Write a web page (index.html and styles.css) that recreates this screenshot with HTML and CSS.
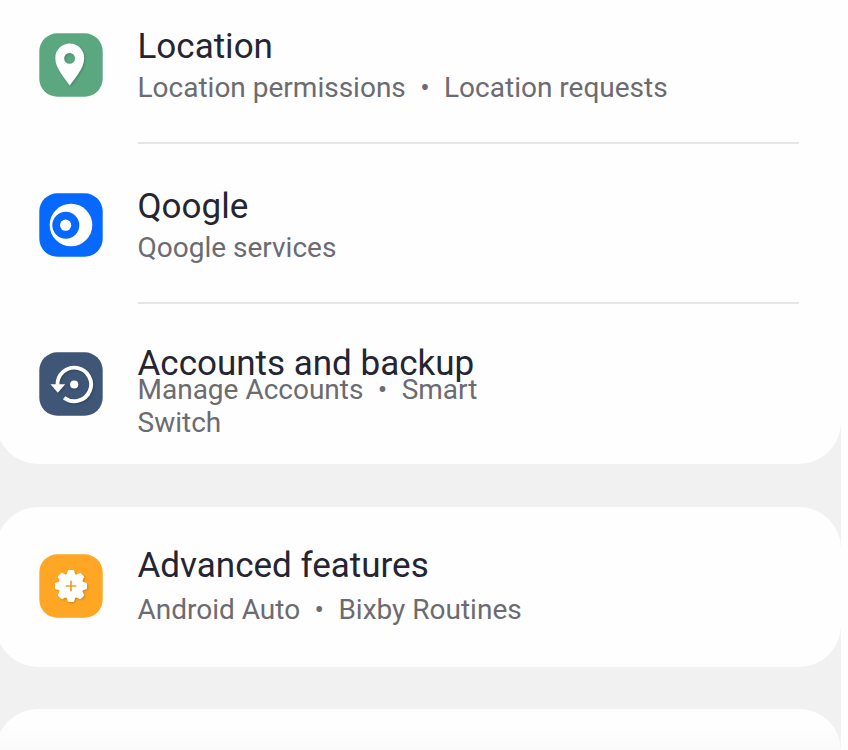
FILE: index.html
```html
<!DOCTYPE html>
<html lang="en">
<head>
<meta charset="utf-8">
<title>Settings</title>
<link rel="stylesheet" href="styles.css">
</head>
<body>
<main class="screen">
  <section class="card card-first">
    <div class="row row-location">
      <svg class="icon" viewBox="0 0 64 64">
        <rect class="tile green" x=".3" y=".3" width="63.4" height="63.4" rx="18"/>
        <path class="white shadow" fill-rule="evenodd" d="M30.8 10.6C22.5 10.6 16.3 17 16.3 25.2C16.3 35.6 26.5 46 30.8 52.6C35.1 46 45.2 35.6 45.2 25.2C45.2 17 39 10.6 30.8 10.6ZM30.6 20A5.4 5.4 0 1 1 30.6 30.8A5.4 5.4 0 1 1 30.6 20Z"/>
      </svg>
      <div class="text">
        <h2>Location</h2>
        <p>Location permissions<span class="dot">•</span>Location requests</p>
      </div>
    </div>
    <div class="row row-qoogle">
      <svg class="icon" viewBox="0 0 64 64">
        <rect class="tile blue" x=".3" y=".3" width="63.4" height="63.4" rx="18"/>
        <circle class="white" cx="32" cy="32" r="21.3"/>
        <circle class="blue" cx="26.8" cy="32.2" r="13.5"/>
        <circle class="white" cx="26.6" cy="32.2" r="5.6"/>
      </svg>
      <div class="text">
        <h2>Qoogle</h2>
        <p>Qoogle services</p>
      </div>
    </div>
    <div class="row row-accounts">
      <svg class="icon" viewBox="0 0 64 64">
        <rect class="tile navy" x=".3" y=".3" width="63.4" height="63.4" rx="18"/>
        <g class="shadow">
          <path class="ring" d="M18.5 33.5A16.8 16.8 0 1 1 25.1 45.8"/>
          <path class="white" d="M11.5 32.2H26.2L18.8 40.7Z"/>
          <circle class="white" cx="35.2" cy="32.5" r="4.1"/>
        </g>
      </svg>
      <div class="text">
        <h2>Accounts and backup</h2>
        <p>Manage Accounts<span class="dot">•</span>Smart<br>Switch</p>
      </div>
    </div>
  </section>
  <section class="card card-advanced">
    <div class="row row-advanced">
      <svg class="icon" viewBox="0 0 64 64">
        <rect class="tile orange" x=".3" y=".3" width="63.4" height="63.4" rx="18"/>
        <g class="shadow" transform="translate(32 32)">
          <circle class="white" r="12.6"/>
          <g class="white">
            <path id="tooth" d="M-4.7-10L-3.2-15.2Q-2.9-16 -2-16H2Q2.9-16 3.2-15.2L4.7-10Z"/>
            <use href="#tooth" transform="rotate(45)"/>
            <use href="#tooth" transform="rotate(90)"/>
            <use href="#tooth" transform="rotate(135)"/>
            <use href="#tooth" transform="rotate(180)"/>
            <use href="#tooth" transform="rotate(225)"/>
            <use href="#tooth" transform="rotate(270)"/>
            <use href="#tooth" transform="rotate(315)"/>
          </g>
          <path class="plus" d="M-5.3 0H5.3M0-5.3V5.3"/>
        </g>
      </svg>
      <div class="text">
        <h2>Advanced features</h2>
        <p>Android Auto<span class="dot">•</span>Bixby Routines</p>
      </div>
    </div>
  </section>
  <section class="card card-next"></section>
</main>
</body>
</html>
```
FILE: styles.css
```css
* { box-sizing: border-box; }
body {
  margin: 0;
  height: 750px;
  overflow: hidden;
  background: #fefefe;
  font-family: Roboto, "Liberation Sans", sans-serif;
}
.screen {
  width: 841px;
  height: 750px;
  overflow: hidden;
  background: #f1f1f1;
  display: flex;
  flex-direction: column;
  gap: 43px;
}
.card {
  flex: none;
  width: 845px;
  margin-left: -4px;
  padding: 0 42px 0 42.5px;
  border-radius: 42px;
  background: #fefefe;
}
.card-first {
  height: 464px;
  border-radius: 0 0 42px 42px;
}
.card-advanced { height: 160px; }
.card-next {
  height: 90px;
  margin-top: -1px;
  background: linear-gradient(#fefefe 15px, #fafafa 41px);
}
.row {
  display: flex;
  gap: 35px;
  height: 160px;
}
.row-location { height: 144px; padding-top: 25px; }
.row-qoogle { padding-top: 41px; }
.row-accounts { padding-top: 38px; }
.row-advanced { padding-top: 38px; }
.icon {
  flex: none;
  width: 64px;
  height: 64px;
  margin-top: 8px;
}
.row-accounts .icon { margin-top: 9.5px; }
.row-advanced .icon { margin-top: 9px; }
.text {
  flex: none;
  width: 661px;
  color: #252532;
}
.row-location .text,
.row-qoogle .text { border-bottom: 2px solid #e6e6e9; }
h2 {
  margin: 1px 0 0;
  font-size: 35px;
  line-height: 42px;
  font-weight: 400;
  white-space: nowrap;
}
.row-advanced h2 { margin-top: 0; }
p {
  margin: 3px 0 0;
  font-size: 28px;
  line-height: 33px;
  color: #6b6b70;
  white-space: nowrap;
}
.row-accounts p { margin-top: -12px; }
.row-advanced p { margin-top: 6px; }
.dot { margin: 0 14.4px; }
.green { fill: #5ba77f; }
.blue { fill: #0768fd; }
.navy { fill: #3f5676; }
.orange { fill: #ffa724; }
.white { fill: #fff; }
.ring {
  fill: none;
  stroke: #fff;
  stroke-width: 3.9;
}
.plus {
  fill: none;
  stroke: #ef9d27;
  stroke-width: 1.7;
}
.shadow { filter: drop-shadow(1px 1px 1px rgba(0, 0, 0, .2)); }
```
